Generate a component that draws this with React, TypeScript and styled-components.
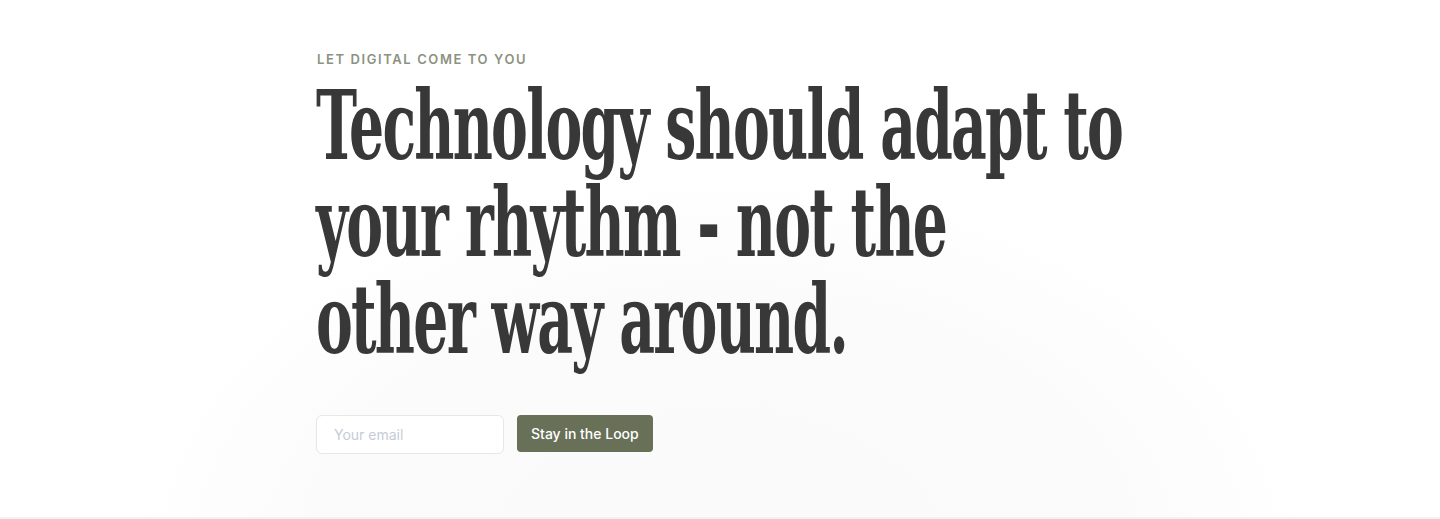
import styled, { createGlobalStyle } from "styled-components";

const GlobalStyle = createGlobalStyle`
    html, body {
        margin: 0;
        padding: 0;
        background: #ffffff;
    }
    * {
        box-sizing: border-box;
    }
`;

const Hero = styled.section`
    position: relative;
    height: 519px;
    overflow: hidden;
    background: #ffffff;
    border-bottom: 2px solid #f1f1f1;
    display: flex;
    justify-content: flex-start;
`;

const Glow = styled.div`
    position: absolute;
    left: 140px;
    top: 180px;
    width: 1160px;
    height: 760px;
    border-radius: 50%;
    background: radial-gradient(ellipse at center, #fafafa 0%, #fbfbfb 50%, rgba(255, 255, 255, 0) 72%);
    pointer-events: none;
`;

const Content = styled.div`
    position: relative;
    margin-left: 316px;
    padding-top: 51px;
    display: flex;
    flex-direction: column;
`;

const Eyebrow = styled.span`
    font-family: "Inter", "Liberation Sans", sans-serif;
    font-size: 13px;
    font-weight: 600;
    letter-spacing: 1.6px;
    color: #8c9282;
    line-height: 16px;
    padding-left: 1px;
`;

const Headline = styled.h1`
    margin: 10px 0 0;
    font-family: "DejaVu Serif", serif;
    font-weight: 700;
    font-size: 96px;
    line-height: 97px;
    letter-spacing: -3px;
    color: #383838;
    white-space: nowrap;
    transform: scaleX(0.575);
    transform-origin: left top;
`;

const Form = styled.form`
    margin-top: 47px;
    display: flex;
    align-items: flex-start;
    gap: 13px;
`;

const EmailInput = styled.input`
    width: 188px;
    height: 39px;
    padding: 0 17px;
    border: 1px solid #e4e7ec;
    border-radius: 6px;
    background: #ffffff;
    font-family: "Inter", "Liberation Sans", sans-serif;
    font-size: 14px;
    color: #333;
    outline: none;

    &::placeholder {
        color: #c4ccd8;
    }
`;

const SubmitButton = styled.button`
    height: 37px;
    padding: 0 14px;
    border: none;
    border-radius: 4px;
    background: #687058;
    color: #ffffff;
    font-family: "Inter", "Liberation Sans", sans-serif;
    font-size: 14px;
    font-weight: 500;
    cursor: pointer;
`;

const App = () => {
    return (
        <>
            <GlobalStyle />
            <Hero>
                <Glow />
                <Content>
                    <Eyebrow>LET DIGITAL COME TO YOU</Eyebrow>
                    <Headline>
                        Technology should adapt to
                        <br />
                        your rhythm - not the
                        <br />
                        other way around.
                    </Headline>
                    <Form onSubmit={(e) => e.preventDefault()}>
                        <EmailInput type="email" placeholder="Your email" />
                        <SubmitButton type="submit">Stay in the Loop</SubmitButton>
                    </Form>
                </Content>
            </Hero>
        </>
    );
};

export default App;
